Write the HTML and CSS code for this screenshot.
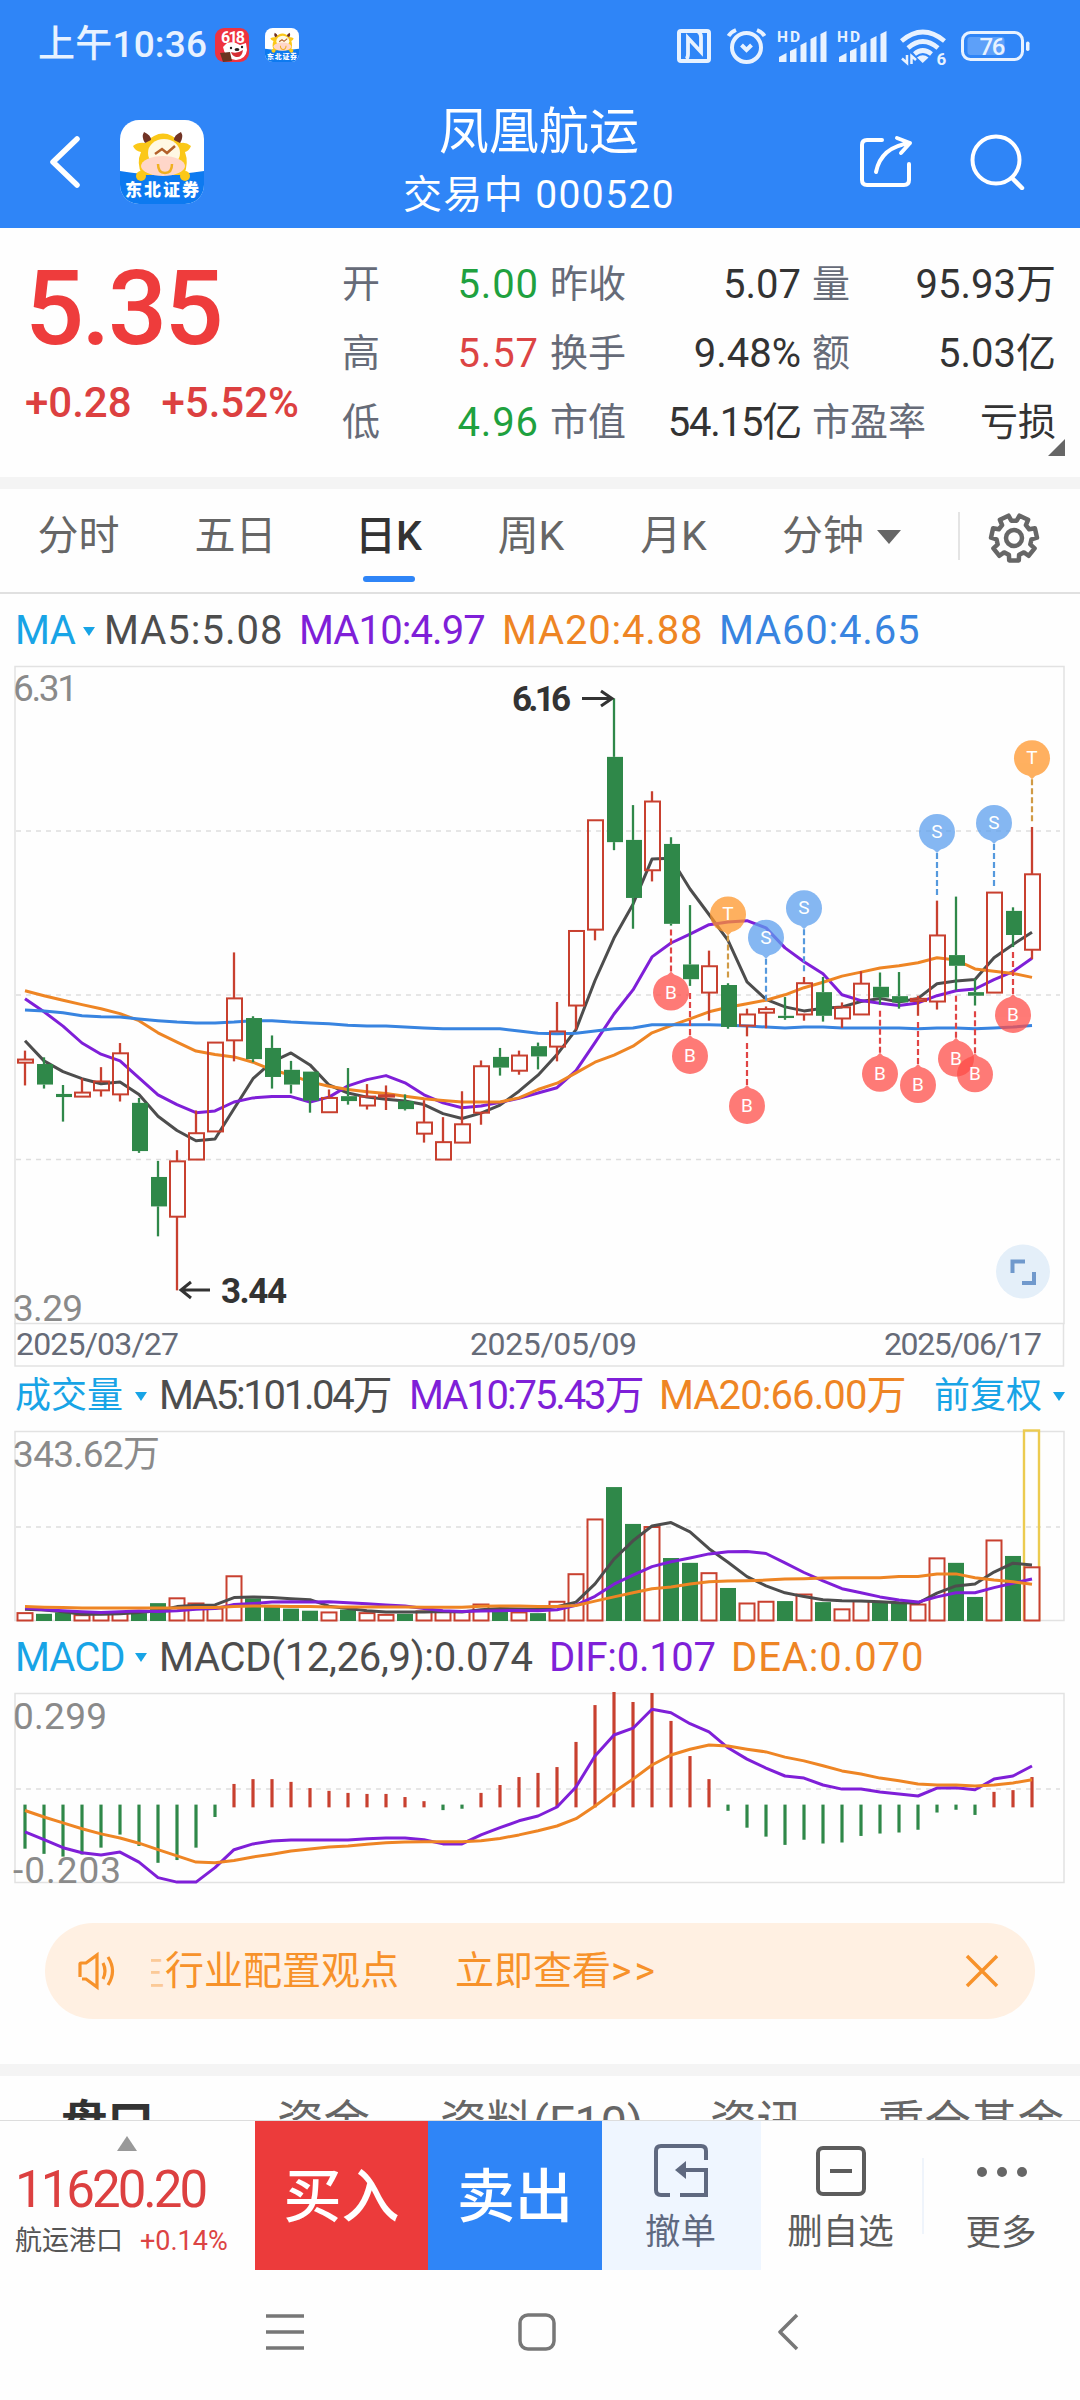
FILE: index.html
```html
<!DOCTYPE html>
<html lang="zh-CN">

<head>
    <meta charset="UTF-8">
    <meta name="viewport" content="width=device-width, initial-scale=1.0">
    <title>凤凰航运 000520</title>
    <link rel="stylesheet" href="styles.css">
</head>

<body>
    <div class="header">
        <div class="status">
            <div class="clock">上午10:36</div>
            <svg class="app-icon" viewBox="0 0 34 34">
                <rect width="34" height="34" rx="9" fill="#ee3340" />
                <text x="18" y="15" text-anchor="middle" font-size="16" font-weight="700" fill="#fff" textLength="24">618</text>
                <path d="M8 19 L12 15 Q19 13 25 17 L31 15 L32 22 Q31 31 21 32 Q10 31 8 19 Z" fill="#fff" />
                <path d="M16 24 Q22 26 28 22 Q27 30 21 29 Q17 28 16 24 Z" fill="#d62f35" />
                <circle cx="16" cy="20" r="1.2" fill="#222" />
                <circle cx="27" cy="19" r="1.2" fill="#222" />
                <ellipse cx="22" cy="21.5" rx="2.4" ry="1.6" fill="#222" />
                <path d="M5 25 L15 24 L17 33 L8 34 Z" fill="#6b3520" />
            </svg>
            <svg class="app-icon second" viewBox="0 0 84 84">
                <use href="#bull" />
            </svg>
            <svg class="status-icons" viewBox="0 0 360 44" width="360" height="44">
                <g fill="none" stroke="#e8f2ff" stroke-width="4">
                    <rect x="9" y="8" width="30" height="30" rx="2" />
                    <path d="M16 36 Q18 35 18 31 V15 L31 29 V14 Q31 10 28 9" stroke-width="3.800" />
                    <circle cx="76.500" cy="24.500" r="14.500" />
                    <path d="M71.500 22 L76.500 27 L81.500 22" />
                    <path d="M58.500 13 Q61 9 66 7 M94.500 13 Q92 9 87 7" />
                </g>
                <g fill="#e8f2ff">
                    <text x="107" y="19" font-size="15.500" font-weight="700" textLength="23">HD</text>
                    <text x="167" y="19" font-size="15.500" font-weight="700" textLength="23">HD</text>
                    <path id="bars" d="M109 34 l7.500 -4 v9 h-7.500 z M120 28 l6.500 -3 v14 h-6.500 z M130.500 22 l6 -3 v20 h-6 z M140.500 16 l6 -3 v26 h-6 z M150.500 11 l6 -3 v31 h-6 z" />
                    <use href="#bars" x="60" />
                    <path d="M252.700 40 L247 34.500 Q252.700 30 258.500 34.500 Z" />
                    <text x="266.500" y="41.500" font-size="17" font-weight="700">6</text>
                    <rect x="356" y="18.500" width="3.500" height="9.500" rx="1.700" />
                    <rect x="297.500" y="14" width="37" height="18" rx="3" opacity=".25" />
                    <text x="309.500" y="32" font-size="24" font-weight="500" textLength="26">76</text>
                </g>
                <g fill="none" stroke="#e8f2ff">
                    <path d="M231.500 18 Q252.700 0 274.500 18 M238 25 Q252.700 12 268 25 M244.500 31 Q252.700 24 261.500 31" stroke-width="4.600" />
                    <path d="M237 32 V40 L232 35.500 M241.500 41 V33 L246 37" stroke-width="2.500" />
                    <rect x="292.500" y="9.500" width="60" height="27" rx="8" stroke-width="3" />
                </g>
            </svg>
        </div>
        <div class="nav-top">
            <svg class="back" viewBox="0 0 32 52">
                <path d="M28 3 L4 26 L28 49" fill="none" stroke="#fff" stroke-width="5.500" stroke-linecap="round" stroke-linejoin="round" />
            </svg>
            <svg class="logo" viewBox="0 0 84 84">
                <defs>
                    <clipPath id="round">
                        <rect width="84" height="84" rx="19" />
                    </clipPath>
                </defs>
                <g id="bull">
                    <g clip-path="url(#round)">
                        <rect width="84" height="84" fill="#fff" />
                        <path d="M0 51 Q40 58 84 51 V84 H0 Z" fill="#0d7af0" />
                        <path d="M13 26 Q18 22 25 23 Q43 4 61 23 Q66 22 71 26 Q69 31 65 32 Q69 43 64 55 H22 Q16 43 21 32 Q15 31 13 26 Z" fill="#fbc818" />
                        <path d="M25 23 Q21 17 24 12 Q31 15 31 20 Z M60 23 Q64 17 61 12 Q54 15 54 20 Z" fill="#713325" />
                        <ellipse cx="44" cy="33" rx="16" ry="14" fill="#fff8e4" />
                        <ellipse cx="43" cy="46" rx="22" ry="10" fill="#ffd6c9" />
                        <path d="M35 34 L42 29 L47 33 L55 26" fill="none" stroke="#b3602a" stroke-width="2.500" />
                        <path d="M38 44 Q38 53 45 53 Q52 53 52 44" fill="none" stroke="#f0b020" stroke-width="2.500" />
                        <circle cx="21" cy="56" r="5" fill="#fbc818" />
                        <circle cx="65" cy="56" r="5" fill="#fbc818" />
                        <text x="42" y="76" text-anchor="middle" font-size="17" font-weight="900" fill="#fff" textLength="74">东北证券</text>
                    </g>
                </g>
            </svg>
            <div class="title">
                <div class="name">凤凰航运</div>
                <div class="code">交易中 000520</div>
            </div>
            <svg class="share" viewBox="0 0 54 54">
                <g fill="none" stroke="#fff" stroke-width="4" stroke-linecap="round" stroke-linejoin="round">
                    <path d="M22 5 H7 Q2 5 2 10 V45 Q2 50 7 50 H44 Q49 50 49 45 V29" />
                    <path d="M16 37 Q21 12 50 8 M37 3 L50 8 L41 18" />
                </g>
            </svg>
            <svg class="search" viewBox="0 0 56 56">
                <circle cx="26" cy="26" r="23.500" fill="none" stroke="#fff" stroke-width="4" />
                <path d="M42 44 L52 54" stroke="#fff" stroke-width="4.500" stroke-linecap="round" />
            </svg>
        </div>
    </div>

    <div class="quote">
        <div class="price">
            <div class="now">5.35</div>
            <div class="change"><span>+0.28</span><span>+5.52%</span></div>
        </div>
        <div class="detail">
            <div class="cell"><span class="label">开</span><span class="green">5.00</span></div>
            <div class="cell"><span class="label">昨收</span><span>5.07</span></div>
            <div class="cell"><span class="label">量</span><span>95.93万</span></div>
            <div class="cell"><span class="label">高</span><span class="red">5.57</span></div>
            <div class="cell"><span class="label">换手</span><span>9.48%</span></div>
            <div class="cell"><span class="label">额</span><span>5.03亿</span></div>
            <div class="cell"><span class="label">低</span><span class="green">4.96</span></div>
            <div class="cell"><span class="label">市值</span><span class="cap">54.15亿</span></div>
            <div class="cell"><span class="label">市盈率</span><span class="loss">亏损</span></div>
        </div>
        <div class="corner"></div>
    </div>

    <div class="band"></div>

    <div class="period">
        <div>分时</div>
        <div>五日</div>
        <div class="active">日K</div>
        <div>周K</div>
        <div>月K</div>
        <div class="minute">分钟<i class="down"></i></div>
        <div class="setting">
            <svg width="52" height="52" viewBox="-26 -26 52 52">
                <path id="gear" fill="none" stroke="#666" stroke-width="4.500" stroke-linejoin="round" />
                <circle r="8" fill="none" stroke="#666" stroke-width="4.500" />
            </svg>
        </div>
    </div>

    <div class="legend ma">
        <div class="pick">MA<i class="down"></i></div>
        <div class="black">MA5:5.08</div>
        <div class="purple">MA10:4.97</div>
        <div class="orange">MA20:4.88</div>
        <div class="blue">MA60:4.65</div>
    </div>
    <svg class="chart" id="kline" width="1080" height="708"></svg>

    <div class="legend volume">
        <div class="pick">成交量<i class="down"></i></div>
        <div class="black">MA5:101.04万</div>
        <div class="purple">MA10:75.43万</div>
        <div class="orange">MA20:66.00万</div>
        <div class="pick">前复权<i class="down"></i></div>
    </div>
    <svg class="chart" id="volume" width="1080" height="200"></svg>

    <div class="legend macd">
        <div class="pick">MACD<i class="down"></i></div>
        <div class="black">MACD(12,26,9):0.074</div>
        <div class="purple">DIF:0.107</div>
        <div class="orange">DEA:0.070</div>
    </div>
    <svg class="chart" id="macd" width="1080" height="200"></svg>

    <div class="notice">
        <svg width="42" height="40" viewBox="0 0 42 40">
            <g fill="none" stroke="#f7922a" stroke-width="3.200">
                <path d="M5 26 V13 Q5 12 6 12 H11 L22 4 V36 L11 28 H7" />
                <path d="M28 12 Q32 20 28 28 M33 6 Q42 20 33 34" />
            </g>
        </svg>
        <div class="fade">生</div>
        <div class="message">行业配置观点</div>
        <div class="look">立即查看<span>&gt;&gt;</span></div>
        <svg class="close" width="34" height="34" viewBox="0 0 34 34">
            <path d="M2 2 L32 32 M32 2 L2 32" stroke="#f7922a" stroke-width="3.500" />
        </svg>
    </div>

    <div class="band"></div>

    <div class="sections">
        <div class="active">盘口</div>
        <div>资金</div>
        <div>资料(F10)</div>
        <div>资讯</div>
        <div>重仓基金</div>
    </div>

    <div class="bottom">
        <div class="index">
            <i class="up"></i>
            <div class="point">11620.20</div>
            <div class="trade"><span>航运港口</span><span class="red">+0.14%</span></div>
        </div>
        <div class="buy">买入</div>
        <div class="sell">卖出</div>
        <div class="tool cancel">
            <svg width="56" height="56" viewBox="0 0 56 56">
                <path d="M52 17 V8 Q52 3 47 3 H7 Q2 3 2 8 V47 Q2 52 7 52 H16 M26 52 H52 V27 H30" fill="none" stroke="#5f6980" stroke-width="4" />
                <path d="M21 27 L32 18 V36 Z" fill="#5f6980" />
            </svg>
            <span>撤单</span>
        </div>
        <div class="tool">
            <svg width="56" height="56" viewBox="0 0 56 56">
                <rect x="4" y="5" width="46" height="46" rx="5" fill="none" stroke="#5c5c5c" stroke-width="4" />
                <path d="M16 28 H38" stroke="#5c5c5c" stroke-width="4" />
            </svg>
            <span>删自选</span>
        </div>
        <div class="tool more">
            <svg width="56" height="56" viewBox="0 0 56 56" fill="#666">
                <circle cx="8" cy="28" r="5" />
                <circle cx="28" cy="28" r="5" />
                <circle cx="48" cy="28" r="5" />
            </svg>
            <span>更多</span>
        </div>
    </div>

    <div class="system">
        <svg width="38" height="38" viewBox="0 0 38 38">
            <path d="M0 3 H38 M0 19 H38 M0 35 H38" stroke="#777" stroke-width="3.500" />
        </svg>
        <svg class="home" width="38" height="38" viewBox="0 0 38 38">
            <rect x="2" y="2" width="34" height="34" rx="8" fill="none" stroke="#777" stroke-width="3.500" />
        </svg>
        <svg width="22" height="38" viewBox="0 0 22 38">
            <path d="M19 2 L2 19 L19 36" fill="none" stroke="#777" stroke-width="3.500" stroke-linejoin="round" />
        </svg>
    </div>

    <script src="script.js"></script>
</body>

</html>
```
FILE: styles.css
```css
* {
    margin: 0;
    padding: 0;
    box-sizing: border-box;
}

body {
    width: 1080px;
    height: 2400px;
    overflow: hidden;
    background-color: #fefefe;
    color: #333;
    font-family: Roboto, "Noto Sans CJK SC", sans-serif;
}

svg {
    display: block;
    flex-shrink: 0;
}

.red {
    color: #dc4444;
}

.green {
    color: #1fa13f;
}

.black {
    color: #4d4d4d;
}

.purple {
    color: #7f1fd8;
}

.orange {
    color: #ee8524;
}

.blue {
    color: #3884e0;
}

/* header */
.header {
    height: 228px;
    background-color: #2f85f7;
    color: #fff;
}

.status {
    display: flex;
    align-items: center;
    height: 90px;
    padding: 0 42px 0 38px;
}

.clock {
    width: 177px;
    font-size: 37px;
    font-weight: 500;
    line-height: 40px;
    letter-spacing: 0.2px;
    color: #e8f2ff;
    white-space: nowrap;
}

.app-icon {
    width: 34px;
    height: 34px;
}

.second {
    margin-left: 16px;
}

.status-icons {
    margin-left: auto;
    margin-top: -1px;
    margin-right: 8px;
    overflow: visible;
}

.nav-top {
    display: flex;
    height: 138px;
    padding: 0 54px 0 49px;
}

.back {
    width: 32px;
    height: 52px;
    margin-top: 46px;
}

.logo {
    width: 84px;
    height: 84px;
    margin: 30px 0 0 39px;
}

.title {
    flex: 1;
    padding-left: 14px;
    text-align: center;
}

.name {
    margin-top: 12px;
    font-size: 50px;
    line-height: 60px;
}

.code {
    margin-top: 11px;
    font-size: 39px;
    line-height: 44px;
    letter-spacing: 1.4px;
}

.share {
    width: 54px;
    height: 54px;
    margin-top: 45px;
}

.search {
    width: 56px;
    height: 56px;
    margin: 44px 0 0 56px;
}

/* quote */
.quote {
    position: relative;
    display: flex;
    height: 249px;
}

.price {
    width: 343px;
    padding: 27px 0 0 25px;
}

.now {
    font-size: 104px;
    font-weight: 500;
    line-height: 108px;
    letter-spacing: -2.5px;
    color: #ee3c3c;
}

.change {
    display: flex;
    justify-content: space-between;
    width: 274px;
    margin-top: 16px;
    font-size: 42px;
    font-weight: 500;
    line-height: 48px;
    color: #dc4040;
}

.detail {
    display: grid;
    grid-template-columns: 194px 248px 241px;
    grid-auto-rows: 69px;
    column-gap: 14px;
    padding-top: 22px;
}

.cell {
    display: flex;
    justify-content: space-between;
    font-size: 40px;
    line-height: 69px;
    white-space: nowrap;
}

.cell span:last-child {
    margin-right: -2px;
}

.cell .green,
.cell .red {
    letter-spacing: 0.9px;
}

.cell .cap {
    letter-spacing: -1.2px;
}

.cell .loss {
    font-size: 38px;
}

.cell .label {
    margin-left: -1px;
    font-size: 38px;
    color: #666b78;
}

.corner {
    position: absolute;
    right: 15px;
    bottom: 21px;
    border-left: 17px solid transparent;
    border-bottom: 17px solid #666;
}

.band {
    height: 12px;
    background-color: #f4f4f4;
}

/* period tabs */
.period {
    display: grid;
    grid-template-columns: 157px 157px 149px 136px 149px 210px 122px;
    height: 105px;
    border-bottom: 2px solid #e0e0e0;
    font-size: 41px;
    line-height: 95px;
    text-align: center;
    color: #666;
}

.period .active {
    display: flex;
    flex-direction: column;
    align-items: center;
    font-weight: 500;
    color: #333;
}

.period .active::after {
    content: "";
    width: 52px;
    height: 6px;
    margin-top: -8px;
    border-radius: 3px;
    background-color: #2f85f7;
}

.minute {
    display: flex;
    align-items: center;
    height: 95px;
    padding-left: 34px;
}

.minute .down {
    margin-left: 13px;
    border-width: 14px 12px 0;
    border-top-color: #666;
}

.down {
    display: inline-block;
    border: solid transparent;
    border-width: 9px 6px 0;
    border-top-color: #18a4e6;
}

.setting {
    align-self: start;
    margin-top: 23px;
    height: 48px;
    padding-left: 28px;
    border-left: 2px solid #e4e4e4;
}

/* legends above each chart */
.legend {
    display: grid;
    align-items: center;
    padding-left: 15px;
    font-size: 40px;
    line-height: 48px;
    white-space: nowrap;
}

.pick {
    display: flex;
    align-items: center;
    justify-content: space-between;
    letter-spacing: -1px;
    color: #18a4e6;
}

.ma {
    grid-template-columns: 80px 196px 203px 217px auto;
    height: 66px;
    padding-top: 8px;
}

.ma div {
    padding-left: 8px;
}

.ma .pick {
    padding-left: 0;
    letter-spacing: -0.5px;
}

.ma .black {
    padding-left: 9px;
    letter-spacing: 1px;
}

.ma .purple {
    letter-spacing: -0.9px;
}

.ma .orange,
.ma .blue {
    letter-spacing: 0.8px;
}

.volume {
    grid-template-columns: 132px 250px 250px 287px 131px;
    height: 56px;
}

.volume .pick {
    font-size: 36px;
    letter-spacing: 0;
}

.volume .black,
.volume .purple,
.volume .orange,
.macd .black,
.macd .purple,
.macd .orange {
    padding-left: 12px;
}

.volume .black {
    letter-spacing: -2.3px;
}

.volume .purple {
    letter-spacing: -2.1px;
}

.volume .orange {
    letter-spacing: -0.9px;
}

.macd {
    grid-template-columns: 132px 390px 182px auto;
    height: 64px;
    padding-top: 3px;
}

.macd .black,
.macd .purple {
    letter-spacing: -0.3px;
}

.macd .orange {
    letter-spacing: 0.9px;
}

.chart text {
    font-family: Roboto, "Noto Sans CJK SC", sans-serif;
}

.frame {
    fill: none;
    stroke: #e2e2e2;
    stroke-width: 1.5;
}

.grid {
    stroke: #dedede;
    stroke-width: 1.5;
    stroke-dasharray: 5 5;
}

.line {
    fill: none;
    stroke-width: 3;
    stroke-linejoin: round;
}

.axis {
    font-size: 37px;
    fill: #8a8a8a;
}

.date {
    font-size: 32px;
    fill: #666b78;
}

.peak {
    font-size: 35px;
    font-weight: 700;
    fill: #333;
}

.arrow {
    fill: none;
    stroke: #333;
    stroke-width: 3;
}

.mark {
    font-size: 19px;
    fill: #fff;
    text-anchor: middle;
}

/* notice */
.notice {
    display: flex;
    align-items: center;
    height: 96px;
    margin: 35px 45px 45px;
    padding: 0 36px 0 30px;
    border-radius: 48px;
    background-color: #fff0e2;
    font-size: 39px;
    line-height: 60px;
    color: #f7922a;
    white-space: nowrap;
}

.fade {
    display: flex;
    justify-content: flex-end;
    width: 14px;
    margin-left: 34px;
    overflow: hidden;
    opacity: 0.4;
}

.look {
    margin-left: 56px;
}

.look span {
    letter-spacing: 3px;
}

.close {
    margin-left: auto;
}

/* section tabs, cut by the bottom bar */
.sections {
    display: flex;
    height: 44px;
    padding: 14px 0 0 61px;
    overflow: hidden;
    font-size: 46.5px;
    line-height: 66px;
    white-space: nowrap;
    color: #666;
}

.sections .active {
    margin-right: 123px;
    font-weight: 700;
    color: #333;
}

.sections div:nth-child(2) {
    margin-right: 70px;
}

.sections div:nth-child(3) {
    margin-right: 67px;
}

.sections div:nth-child(4) {
    margin-right: 75px;
}

/* bottom bar */
.bottom {
    display: grid;
    grid-template-columns: 255px 173px 174px 159px 161px 158px;
    grid-template-rows: 149px;
    height: 150px;
    border-top: 1px solid #ddd;
}

.index {
    display: flex;
    flex-direction: column;
    padding: 15px 0 0 15px;
}

.up {
    width: 20px;
    margin-left: 102px;
    border: solid transparent;
    border-width: 0 10px 15px;
    border-bottom-color: #999;
}

.point {
    margin-top: 9px;
    font-size: 51px;
    line-height: 60px;
    letter-spacing: -3px;
    color: #dc4040;
}

.trade {
    display: flex;
    gap: 17px;
    margin-top: 5px;
    font-size: 27px;
    line-height: 32px;
    color: #555;
}

.buy,
.sell {
    background-color: #ec3b3b;
    font-size: 58px;
    font-weight: 500;
    line-height: 152px;
    text-align: center;
    color: #fff;
}

.sell {
    background-color: #2f85f7;
}

.tool {
    display: flex;
    flex-direction: column;
    align-items: center;
    padding-top: 22px;
    font-size: 35.5px;
    line-height: 50px;
    color: #5c5c5c;
}

.tool span {
    margin-top: 8px;
    margin-right: 2px;
}

.cancel {
    background-color: #eff6ff;
    color: #5f6980;
}

.more {
    align-self: center;
    height: 76px;
    padding-top: 0;
    border-left: 2px solid #eff4fb;
}

.more svg {
    margin-top: -14px;
}

/* system navigation */
.system {
    display: flex;
    align-items: center;
    height: 124px;
    padding-left: 266px;
}

.home {
    margin: 0 222px 0 214px;
}
```
FILE: script.js
```js
var FIRST = 25;
var STEP = 19;
var RED = '#c8402f';
var GREEN = '#2f8849';
var BLACK = '#4d4d4d';
var PURPLE = '#7f1fd8';
var ORANGE = '#ee8524';
var BLUE = '#3884e0';

// 1 = up, 0 = down, then high, body top, body bottom, low
var candles = [
    [1, 875, 895, 902, 953], [0, 890, 905, 951, 960], [0, 952, 972, 979, 1034], [1, 937, 969, 978, 978],
    [1, 912, 944, 964, 978], [1, 858, 881, 973, 989], [0, 981, 992, 1100, 1104], [0, 1122, 1158, 1224, 1291],
    [1, 1098, 1123, 1247, 1412], [1, 1009, 1060, 1119, 1119], [1, 857, 857, 1056, 1056], [1, 655, 758, 852, 899],
    [0, 798, 802, 894, 901], [0, 841, 869, 934, 960], [0, 898, 918, 951, 971], [0, 922, 922, 987, 1014],
    [1, 962, 981, 1013, 1013], [0, 914, 977, 988, 996], [1, 950, 978, 998, 1007], [1, 953, 975, 978, 1008],
    [0, 973, 988, 1006, 1009], [1, 986, 1036, 1061, 1081], [1, 1024, 1080, 1119, 1119], [1, 966, 1040, 1081, 1081],
    [1, 897, 910, 1014, 1041], [0, 869, 889, 913, 931], [1, 875, 886, 920, 929], [0, 857, 865, 888, 917],
    [1, 766, 832, 866, 899], [1, 607, 607, 774, 828], [1, 359, 359, 604, 628], [0, 86, 217, 408, 426],
    [0, 325, 403, 533, 602], [1, 294, 317, 471, 496], [0, 397, 412, 591, 595], [0, 549, 682, 715, 730],
    [1, 651, 686, 745, 808], [0, 724, 728, 822, 826], [1, 781, 794, 819, 843], [1, 776, 782, 790, 825],
    [0, 755, 797, 802, 806], [1, 710, 724, 794, 808], [0, 710, 744, 797, 810], [1, 767, 778, 803, 824],
    [1, 697, 725, 794, 794], [0, 700, 732, 756, 772], [0, 699, 753, 767, 781], [1, 752, 759, 764, 797],
    [1, 539, 617, 765, 783], [0, 530, 661, 685, 740], [0, 714, 744, 752, 774], [1, 521, 521, 745, 745],
    [0, 554, 562, 616, 643], [1, 374, 480, 649, 670]
];
var ma5 = [853, 898, 922, 938, 949, 945, 973, 1022, 1054, 1077, 1073, 1005, 938, 900, 880, 907, 952, 970, 979, 984, 988, 996, 1016, 1027, 1015, 997, 966, 930, 884, 828, 718, 623, 547, 446, 444, 513, 570, 628, 721, 760, 777, 786, 780, 777, 765, 758, 766, 758, 725, 719, 716, 667, 637, 610];
var ma10 = [759, 788, 820, 858, 883, 898, 936, 974, 996, 1014, 1010, 990, 981, 978, 978, 990, 979, 954, 940, 931, 947, 974, 992, 1003, 999, 991, 982, 970, 958, 920, 857, 793, 739, 665, 634, 614, 593, 587, 584, 600, 645, 676, 703, 750, 763, 769, 774, 768, 752, 741, 737, 716, 698, 668];
var ma20 = [741, 752, 762, 772, 781, 792, 808, 835, 856, 876, 884, 889, 901, 918, 930, 945, 955, 962, 967, 971, 977, 983, 987, 990, 990, 990, 981, 962, 948, 925, 901, 885, 865, 835, 819, 804, 788, 778, 770, 762, 750, 734, 722, 708, 699, 690, 685, 678, 667, 672, 692, 697, 702, 711];
var ma60 = [784, 786, 790, 797, 799, 800, 804, 808, 811, 813, 813, 811, 808, 808, 811, 813, 815, 818, 820, 820, 822, 824, 826, 826, 826, 826, 831, 836, 837, 836, 831, 826, 824, 817, 817, 817, 817, 818, 820, 822, 824, 822, 822, 824, 824, 824, 824, 826, 824, 824, 826, 824, 822, 819];
// buy / sell / both, candle index, circle centre
var marks = [
    ['B', 34, 745], ['B', 35, 887], ['T', 37, 570], ['B', 38, 999], ['S', 39, 622], ['S', 41, 556], ['B', 45, 927],
    ['B', 47, 952], ['S', 48, 385], ['B', 49, 893], ['B', 50, 928], ['S', 51, 365], ['B', 52, 795], ['T', 53, 220]
];

var volumes = [735, 737, 733, 741, 738, 733, 735, 706, 692, 707, 722, 628, 692, 711, 722, 728, 733, 725, 735, 740, 737, 730, 732, 730, 710, 730, 733, 735, 702, 622, 463, 369, 476, 485, 575, 589, 619, 662, 707, 702, 700, 681, 703, 724, 700, 704, 704, 710, 576, 589, 688, 524, 569, 602];
var vol5 = [724, 726, 731, 738, 738, 737, 733, 728, 716, 712, 711, 690, 688, 690, 693, 696, 715, 722, 728, 732, 732, 732, 730, 732, 725, 722, 723, 724, 716, 703, 650, 578, 525, 482, 472, 499, 548, 587, 629, 656, 676, 687, 696, 699, 700, 702, 705, 706, 677, 656, 650, 616, 590, 595];
var vol10 = [720, 725, 728, 731, 733, 731, 729, 730, 728, 724, 722, 710, 707, 703, 702, 703, 702, 705, 708, 711, 714, 722, 728, 730, 729, 728, 727, 728, 725, 712, 686, 651, 625, 600, 586, 575, 563, 557, 556, 562, 589, 617, 641, 664, 676, 688, 697, 703, 688, 676, 676, 661, 648, 636];
var vol20 = [716, 718, 719, 720, 720, 720, 720, 720, 720, 719, 719, 716, 714, 715, 716, 716, 717, 717, 717, 717, 717, 718, 718, 718, 715, 714, 714, 716, 716, 713, 700, 688, 676, 664, 659, 650, 644, 642, 641, 639, 636, 635, 633, 632, 632, 632, 629, 629, 621, 621, 632, 639, 644, 651];

var hist = [1419, 1434, 1442, 1436, 1416, 1378, 1411, 1460, 1452, 1416, 1327, 1231, 1217, 1217, 1225, 1243, 1251, 1257, 1260, 1260, 1269, 1281, 1307, 1303, 1257, 1234, 1211, 1199, 1182, 1109, 1002, 964, 993, 967, 1048, 1150, 1217, 1309, 1358, 1384, 1408, 1393, 1404, 1401, 1382, 1375, 1372, 1364, 1314, 1306, 1321, 1254, 1249, 1211];
var dif = [1370, 1393, 1416, 1431, 1437, 1429, 1458, 1503, 1516, 1516, 1474, 1422, 1405, 1397, 1394, 1394, 1394, 1394, 1390, 1388, 1388, 1393, 1405, 1405, 1379, 1358, 1338, 1324, 1298, 1240, 1150, 1089, 1069, 1014, 1024, 1056, 1080, 1126, 1159, 1185, 1208, 1214, 1234, 1246, 1246, 1254, 1260, 1266, 1243, 1242, 1248, 1217, 1208, 1179];
var dea = [1308, 1327, 1344, 1361, 1376, 1388, 1403, 1422, 1440, 1458, 1460, 1453, 1443, 1435, 1426, 1420, 1414, 1411, 1406, 1402, 1400, 1399, 1399, 1399, 1396, 1389, 1379, 1367, 1353, 1332, 1295, 1254, 1217, 1176, 1147, 1130, 1118, 1121, 1130, 1138, 1153, 1164, 1178, 1193, 1202, 1214, 1222, 1231, 1234, 1234, 1237, 1234, 1228, 1219];

function x(i) {
    return FIRST + STEP * i;
}

// each pane has its own vertical scale
function priceY(v) {
    return v / 2.24;
}

function volumeY(v) {
    return v / 2.9037 - 64;
}

function macdY(v) {
    return v / 2.9037 - 328;
}

function text(cls, left, base, width, str) {
    return `<text class="${cls}" x="${left}" y="${base}" textLength="${width}">${str}</text>`;
}

function line(data, scale, color) {
    var points = data.map(function (v, i) {
        return x(i) + ',' + scale(v).toFixed(1);
    });
    return `<polyline class="line" stroke="${color}" points="${points.join(' ')}"/>`;
}

function seg(x1, y1, x2, y2, color, width, extra) {
    return `<line x1="${x1}" y1="${y1}" x2="${x2}" y2="${y2}" stroke="${color}" stroke-width="${width}" ${extra || ''}/>`;
}

function frame(top, bottom, rows) {
    var html = `<rect class="frame" x="15" y="${top}" width="1049" height="${bottom - top}"/>`;
    rows.forEach(function (y) {
        html += `<line class="grid" x1="16" y1="${y}" x2="1060" y2="${y}"/>`;
    });
    return html;
}

function drawKline() {
    var html = frame(6.5, 663.5, [171, 335, 499.5]);
    html += '<path class="frame" d="M15 663 V706 H1063.5 V663"/>';
    html += line(ma5, priceY, BLACK) + line(ma10, priceY, PURPLE) + line(ma20, priceY, ORANGE) + line(ma60, priceY, BLUE);
    candles.forEach(function (c, i) {
        var high = priceY(c[1]), top = priceY(c[2]), bottom = priceY(c[3]), low = priceY(c[4]);
        var color = c[0] ? RED : GREEN;
        html += seg(x(i), high, x(i), top, color, 2.3) + seg(x(i), bottom, x(i), low, color, 2.3);
        if (c[0]) {
            html += `<rect x="${x(i) - 7}" y="${top}" width="15" height="${bottom - top}" fill="none" stroke="${RED}" stroke-width="2"/>`;
        } else {
            html += `<rect x="${x(i) - 7}" y="${top}" width="16" height="${bottom - top}" fill="${GREEN}"/>`;
        }
    });
    marks.forEach(function (m) {
        var cx = x(m[1]);
        var color = { B: '#ff4d48', S: '#5c9fee', T: '#ff9528' }[m[0]];
        var dash = { B: '#e04444', S: '#5599dd', T: '#d09a45' }[m[0]];
        var cy = priceY(m[2]);
        var dir = m[0] == 'B' ? -1 : 1;
        html += seg(cx, cy + dir * 63, cx, cy + dir * 19, dash, 2.2, 'stroke-dasharray="6 3"');
        html += `<g opacity="0.74" fill="${color}"><circle cx="${cx}" cy="${cy}" r="18"/>`;
        html += `<path d="M${cx - 4} ${cy + dir * 17} h8 l-4 ${dir * 4} z"/></g>`;
        html += `<text class="mark" x="${cx}" y="${cy + 6}">${m[0]}</text>`;
    });
    html += text('axis', 13, 41, 65, '6.31') + text('axis', 13, 661, 70, '3.29');
    html += text('date', 16, 695, 163, '2025/03/27') + text('date', 470, 695, 167, '2025/05/09') + text('date', 884, 695, 158, '2025/06/17');
    html += text('peak', 512, 51, 59, '6.16') + text('peak', 221, 643, 66, '3.44');
    html += '<path class="arrow" d="M582 38.500 H612 M601 31 L612 38.500 L601 46"/>';
    html += '<path class="arrow" d="M210 630 H181 M191 622 L181 630 L191 638"/>';
    html += '<circle cx="1023" cy="611.500" r="27" fill="#e4eff9"/>';
    html += '<path d="M1012.500 613 V601.500 H1025 M1034 612 V623 H1022" fill="none" stroke="#7099cc" stroke-width="4"/>';
    document.getElementById('kline').innerHTML = html;
}

function drawVolume() {
    var base = 196.5;
    var html = frame(7.5, base, [103]);
    html += `<rect x="1024" y="6.500" width="15" height="189" fill="none" stroke="#eccb50" stroke-width="2.4"/>`;
    volumes.forEach(function (v, i) {
        var top = volumeY(v);
        if (candles[i][0]) {
            html += `<rect x="${x(i) - 7.5}" y="${top}" width="15" height="${base - top}" fill="#fefefe" stroke="${RED}" stroke-width="2"/>`;
        } else {
            html += `<rect x="${x(i) - 8}" y="${top}" width="16" height="${base - top + 0.5}" fill="${GREEN}"/>`;
        }
    });
    html += line(vol5, volumeY, BLACK) + line(vol10, volumeY, PURPLE) + line(vol20, volumeY, ORANGE);
    html += text('axis', 13, 43, 147, '343.62万');
    document.getElementById('volume').innerHTML = html;
}

function drawMacd() {
    var html = frame(5.5, 194.5, [101]);
    hist.forEach(function (v, i) {
        var up = v < 1296;
        html += seg(x(i), macdY(v), x(i), macdY(up ? 1299 : 1291), up ? RED : GREEN, 3.2);
    });
    html += text('axis', 13, 41, 94, '0.299') + text('axis', 13, 195, 108, '-0.203');
    html += line(dif, macdY, PURPLE) + line(dea, macdY, ORANGE);
    document.getElementById('macd').innerHTML = html;
}

// seven teeth, one pointing down
function drawGear() {
    var d = '';
    for (var k = 0; k < 7; k++) {
        [[-17, 17.5], [-12, 23], [12, 23], [17, 17.5]].forEach(function (p) {
            var a = (90 + k * 360 / 7 + p[0]) * Math.PI / 180;
            d += (d ? 'L' : 'M') + (Math.cos(a) * p[1]).toFixed(1) + ' ' + (Math.sin(a) * p[1]).toFixed(1);
        });
    }
    document.getElementById('gear').setAttribute('d', d + 'Z');
}

drawKline();
drawVolume();
drawMacd();
drawGear();
```
